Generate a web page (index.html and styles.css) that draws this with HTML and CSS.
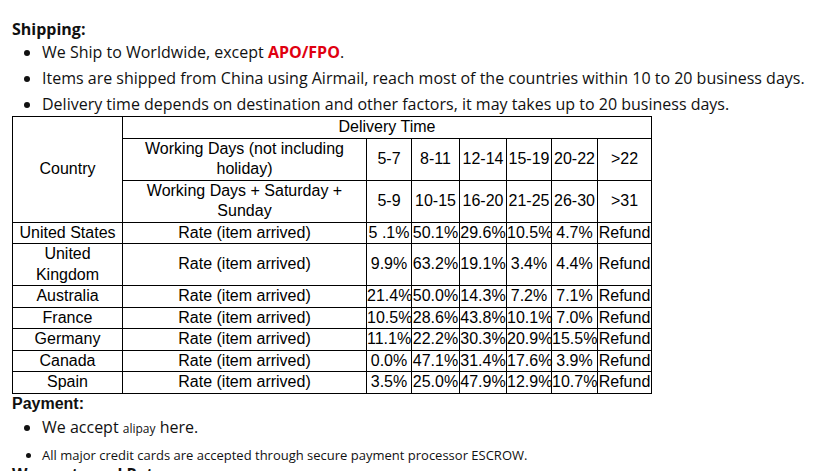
FILE: index.html
```html
<!DOCTYPE html>
<html>
<head>
<meta charset="utf-8">
<link rel="stylesheet" href="styles.css">
</head>
<body>
<div class="page">
  <h3 class="title">Shipping:</h3>
  <ul class="list">
    <li>We Ship to Worldwide, except <span class="red">APO/FPO</span>.</li>
    <li>Items are shipped from China using Airmail, reach most of the countries within 10 to 20 business days.</li>
    <li>Delivery time depends on destination and other factors, it may takes up to 20 business days.</li>
  </ul>
  <table class="rates">
    <colgroup>
      <col class="c-country"><col class="c-desc"><col class="c1"><col class="c2"><col class="c3"><col class="c4"><col class="c5"><col class="c6">
    </colgroup>
    <tr class="r-head"><td rowspan="3">Country</td><td colspan="7">Delivery Time</td></tr>
    <tr class="r-two"><td>Working Days (not including holiday)</td><td>5-7</td><td>8-11</td><td>12-14</td><td>15-19</td><td>20-22</td><td>&gt;22</td></tr>
    <tr class="r-two"><td>Working Days + Saturday + Sunday</td><td>5-9</td><td>10-15</td><td>16-20</td><td>21-25</td><td>26-30</td><td>&gt;31</td></tr>
    <tr><td>United States</td><td>Rate (item arrived)</td><td>5 .1%</td><td>50.1%</td><td>29.6%</td><td>10.5%</td><td>4.7%</td><td>Refund</td></tr>
    <tr class="r-two"><td>United Kingdom</td><td>Rate (item arrived)</td><td>9.9%</td><td>63.2%</td><td>19.1%</td><td>3.4%</td><td>4.4%</td><td>Refund</td></tr>
    <tr><td>Australia</td><td>Rate (item arrived)</td><td>21.4%</td><td>50.0%</td><td>14.3%</td><td>7.2%</td><td>7.1%</td><td>Refund</td></tr>
    <tr><td>France</td><td>Rate (item arrived)</td><td>10.5%</td><td>28.6%</td><td>43.8%</td><td>10.1%</td><td>7.0%</td><td>Refund</td></tr>
    <tr><td>Germany</td><td>Rate (item arrived)</td><td>11.1%</td><td>22.2%</td><td>30.3%</td><td>20.9%</td><td>15.5%</td><td>Refund</td></tr>
    <tr><td>Canada</td><td>Rate (item arrived)</td><td>0.0%</td><td>47.1%</td><td>31.4%</td><td>17.6%</td><td>3.9%</td><td>Refund</td></tr>
    <tr><td>Spain</td><td>Rate (item arrived)</td><td>3.5%</td><td>25.0%</td><td>47.9%</td><td>12.9%</td><td>10.7%</td><td>Refund</td></tr>
  </table>
  <h3 class="title2">Payment:</h3>
  <ul class="list2">
    <li class="big">We accept <span class="small">alipay</span> here.</li>
    <li class="tiny">All major credit cards are accepted through secure payment processor ESCROW.</li>
  </ul>
  <h3 class="title3">Warranty and Returns:</h3>
</div>
</body>
</html>
```
FILE: styles.css
```css
html, body {
  margin: 0;
  padding: 0;
  background: #fff;
}
.page {
  padding: 19px 0 0 12px;
  color: #111;
  font-family: "Open Sans", "Liberation Sans", sans-serif;
}
.title {
  margin: 0;
  font-size: 16px;
  line-height: 20px;
  font-weight: 700;
}
.list {
  margin: 0 0 -1px;
  padding: 0 0 0 30px;
  font-size: 16px;
  line-height: 26px;
}
.red {
  color: #e00010;
  font-weight: 700;
}
.rates {
  border-collapse: collapse;
  table-layout: fixed;
  width: 640px;
  font-family: "Liberation Sans", Arial, sans-serif;
  font-size: 16px;
  color: #000;
}
.rates td {
  border: 1px solid #000;
  padding: 0;
  text-align: center;
  vertical-align: middle;
  line-height: 20.5px;
}
.c-country { width: 110px; }
.c-desc { width: 244px; }
.c1 { width: 45px; }
.c2 { width: 48px; }
.c3 { width: 47px; }
.c4 { width: 45px; }
.c5 { width: 46px; }
.c6 { width: 54px; }
.title2 {
  margin: 0;
  font-family: "Liberation Sans", Arial, sans-serif;
  font-size: 16px;
  line-height: 20px;
  font-weight: 700;
}
.list2 {
  margin: 0;
  padding: 0 0 0 30px;
}
.big {
  font-size: 16px;
  line-height: 26px;
}
.small {
  font-size: 12px;
}
.tiny {
  font-size: 13px;
  line-height: 19px;
  margin-top: 4px;
}
.title3 {
  margin: 0;
  font-size: 16px;
  line-height: 18px;
  font-weight: 700;
}
```
